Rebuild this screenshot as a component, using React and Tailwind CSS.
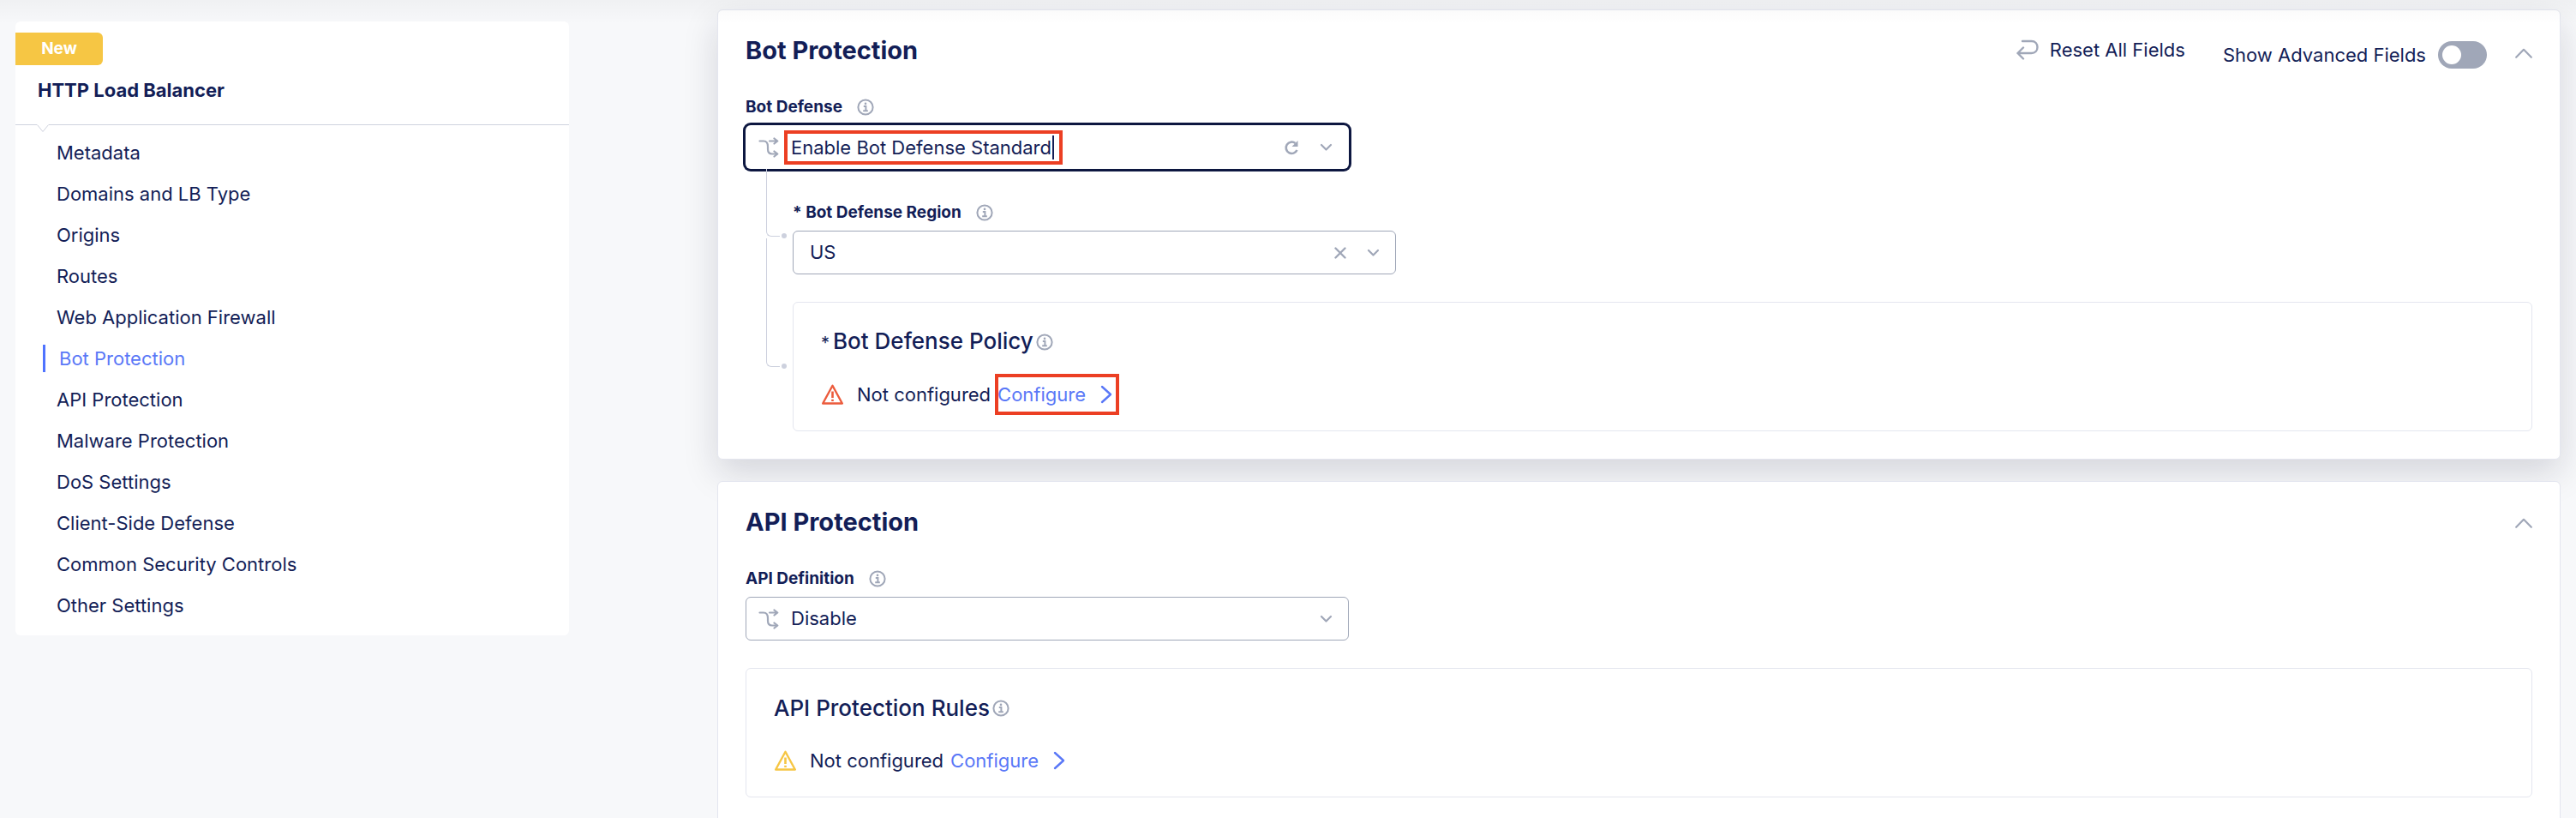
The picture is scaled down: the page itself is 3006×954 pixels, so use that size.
function Info() {
  return (
    <svg aria-hidden="true" viewBox="0 0 20 20" className="size-5 shrink-0" fill="none" stroke="#a0a7b8" strokeWidth="2">
      <circle cx="10" cy="10" r="8.6" />
      <circle cx="10" cy="5.9" r="1.3" fill="#a0a7b8" stroke="none" />
      <path d="M7.8 8.9h2.6v5M7.2 14.3h5.6" strokeWidth="2" />
    </svg>
  );
}

function Branch() {
  return (
    <svg aria-hidden="true" viewBox="0 0 24 24" className="size-6 shrink-0" fill="none" stroke="#a0a7b8" strokeWidth="2.2" strokeLinecap="round" strokeLinejoin="round">
      <path d="M1.5 4.500H6C10 4.500 11 7 11 11V14C11 17.500 12.500 19.500 16 19.500H21.500" />
      <path d="M13 4.500H22M18.500 1.500 22.300 4.500 18.500 7.500M18.500 16.500 22.300 19.500 18.500 22.500" />
    </svg>
  );
}

function ChevronDown() {
  return (
    <svg aria-hidden="true" viewBox="0 0 16 16" className="size-4" fill="none" stroke="#a0a7b8" strokeWidth="2.2" strokeLinecap="round" strokeLinejoin="round">
      <path d="m2 5 5.500 5.500L13 5" />
    </svg>
  );
}

function Collapse({ label }) {
  return (
    <button type="button" aria-label={label} className="flex h-8 w-5 items-center">
      <svg viewBox="0 0 20 12" className="h-3 w-5" fill="none" stroke="#a0a7b8" strokeWidth="2.2" strokeLinecap="round" strokeLinejoin="round">
        <path d="m1.200 10.800 8.800-9 8.800 9" />
      </svg>
    </button>
  );
}

function Warning({ color }) {
  return (
    <svg aria-hidden="true" viewBox="0 0 26 24" className="h-6 w-[26px] shrink-0" fill="none" stroke={color} strokeWidth="2.4">
      <path d="M13.500 1.800 24.800 22.500H2.200Z" strokeLinejoin="round" />
      <path d="M13.500 8.500v7.500M13.500 17.700v2.300" strokeWidth="2.6" />
    </svg>
  );
}

function FieldLabel({ htmlFor, children }) {
  return (
    <div className="flex h-6 items-center gap-[17px]">
      <label htmlFor={htmlFor} className="text-[19px] leading-6 font-bold">{children}</label>
      <Info />
    </div>
  );
}

function SettingBox({ title, required, color, highlighted }) {
  return (
    <section className="mt-8 flex h-[151px] flex-col rounded-md border border-[#e4e6ef] px-8 pt-7">
      <h3 className="flex h-9 items-center gap-[3px] text-[26px] leading-9 font-medium">
        <span>
          {required && <span className="mr-1 text-[20px] font-normal">*</span>}
          {title}
        </span>
        <Info />
      </h3>
      <div className="mt-[27px] flex h-8 items-center text-[22px] leading-8">
        <Warning color={color} />
        <span className="ml-4">Not configured</span>
        <a href="#configure" className="relative ml-2 flex items-center gap-[17px] text-[#5a78f7]">
          Configure
          <svg aria-hidden="true" viewBox="0 0 14 22" className="h-[22px] w-[14px]" fill="none" stroke="#5a78f7" strokeWidth="2.4" strokeLinecap="round" strokeLinejoin="round">
            <path d="m2 2 10 9-10 9" />
          </svg>
          {highlighted && <span className="absolute -inset-y-2 -right-2 -left-[3px] border-4 border-[#ec3f23]" />}
        </a>
      </div>
    </section>
  );
}

function CardTitle({ children }) {
  return <h2 className="text-[29px] leading-10 font-bold">{children}</h2>;
}

const links = [
  "Metadata",
  "Domains and LB Type",
  "Origins",
  "Routes",
  "Web Application Firewall",
  "Bot Protection",
  "API Protection",
  "Malware Protection",
  "DoS Settings",
  "Client-Side Defense",
  "Common Security Controls",
  "Other Settings",
];

export default function App() {
  return (
    <div className="relative flex h-screen items-start gap-[173px] overflow-hidden bg-[#f7f8fa] pr-[18px] pl-[18px] font-['Inter',sans-serif] text-[#131e57]">
      <aside className="mt-[25px] w-[646px] shrink-0 rounded-md bg-white">
        <div className="relative h-[121px] border-b border-[#cfd2de] pt-[13px]">
          <span className="flex h-[38px] w-[102px] items-center justify-center rounded-r-md bg-[#f6c644] text-[19px] font-bold text-white">New</span>
          <h1 className="mt-[13px] pl-[26px] text-[22px] leading-8 font-bold">HTTP Load Balancer</h1>
          <svg aria-hidden="true" viewBox="0 0 16 10" className="absolute top-full left-6 h-[10px] w-4" fill="#fff" stroke="#cfd2de">
            <path d="M1 0 8 8.500 15 0" />
            <path d="M1.500 0H14.500" stroke="#fff" strokeWidth="2" />
          </svg>
        </div>
        <nav aria-label="Sections" className="pt-2 pb-[11px]">
          {links.map((t) =>
            t === "Bot Protection" ? (
              <a key={t} href="#bot" aria-current="true" className="flex h-12 items-center pl-8 text-[22px] text-[#5a78f7]">
                <span className="flex h-8 items-center border-l-3 border-[#4f73ff] pl-4">{t}</span>
              </a>
            ) : (
              <a key={t} href="#section" className="flex h-12 items-center pl-12 text-[22px]">{t}</a>
            ),
          )}
        </nav>
      </aside>

      <main className="mt-[11px] flex min-w-0 grow flex-col gap-[25px]">
        <section className="rounded-md border border-[#e4e6ef] bg-white px-8 pb-8 shadow-[0_16px_40px_rgba(20,20,50,0.15)]">
          <header className="flex items-start justify-between pt-[27px]">
            <CardTitle>Bot Protection</CardTitle>
            <div className="flex items-start text-[22px] leading-8">
              <button type="button" className="mt-[3px] flex items-center gap-[13px]">
                <svg aria-hidden="true" viewBox="0 0 26 24" className="h-6 w-[26px]" fill="none" stroke="#a0a7b8" strokeWidth="2.4" strokeLinecap="round" strokeLinejoin="round">
                  <path d="M7 2H17.500C22 2 24.500 5 24.500 9S22 16 17.500 16H1.500M8 9.500 1.500 16 8 22.500" />
                </svg>
                Reset All Fields
              </button>
              <label className="mt-[9px] ml-11 flex items-center gap-[14px]">
                Show Advanced Fields
                <input type="checkbox" role="switch" className="h-8 w-[57px] appearance-none rounded-full bg-[#a0a7b8] p-[5px] before:block before:size-[22px] before:rounded-full before:bg-white" />
              </label>
              <div className="mt-[7px] ml-[33px]"><Collapse label="Collapse Bot Protection" /></div>
            </div>
          </header>

          <div className="mt-[33px]">
            <FieldLabel htmlFor="bot-defense">Bot Defense</FieldLabel>
            <div className="mt-[9px] flex h-[51px] w-[704px] items-center rounded-md pr-[18px] pl-[15px] ring-3 ring-[#0d1740]">
              <Branch />
              <div className="relative ml-[14px] flex items-center">
                <input id="bot-defense" defaultValue="Enable Bot Defense Standard" className="w-[306px] bg-transparent text-[22px] leading-8 outline-none" />
                <span className="-ml-px h-7 w-[2px] bg-[#131e57]" />
                <span className="absolute -inset-y-1 -right-[10px] -left-2 border-4 border-[#ec3f23]" />
              </div>
              <button type="button" aria-label="Reset Bot Defense" className="ml-auto">
                <svg viewBox="0 0 18 18" className="size-[18px]" fill="none" stroke="#a0a7b8" strokeWidth="2.6">
                  <path d="M15.500 12A6.700 6.700 0 1 1 13.500 4" />
                  <path d="M16.500 1V8H9.500Z" fill="#a0a7b8" stroke="none" />
                </svg>
              </button>
              <span className="ml-6"><ChevronDown /></span>
            </div>

            <div className="flex">
              <div aria-hidden="true" className="flex w-[55px] shrink-0 flex-col pl-6">
                <div className="relative h-[79px] w-4 rounded-bl-md border-b border-l border-[#cdd1de]">
                  <span className="absolute -right-2 -bottom-[3px] size-[6px] rounded-full bg-[#cdd1de]" />
                </div>
                <div className="relative mt-[2px] h-[150px] w-4 rounded-bl-md border-b border-l border-[#cdd1de]">
                  <span className="absolute -right-2 -bottom-[3px] size-[6px] rounded-full bg-[#cdd1de]" />
                </div>
              </div>
              <div className="min-w-0 grow pt-[39px]">
                <FieldLabel htmlFor="region"><span aria-hidden="true">* </span>Bot Defense Region</FieldLabel>
                <div className="relative mt-[9px] w-[704px]">
                  <select id="region" className="block h-[51px] w-full appearance-none rounded-md border border-[#a0a7b8] px-[19px] text-[22px]">
                    <option>US</option>
                  </select>
                  <div className="pointer-events-none absolute inset-y-0 right-[18px] flex items-center gap-6">
                    <svg aria-hidden="true" viewBox="0 0 14 14" className="size-[14px]" fill="none" stroke="#a0a7b8" strokeWidth="2.4" strokeLinecap="round">
                      <path d="m1.500 1.500 11 11M12.500 1.500l-11 11" />
                    </svg>
                    <ChevronDown />
                  </div>
                </div>
                <SettingBox title="Bot Defense Policy" required highlighted color="#ec5b3c" />
              </div>
            </div>
          </div>
        </section>

        <section className="rounded-md border border-[#e4e6ef] bg-white px-8 pb-12">
          <header className="flex items-start justify-between pt-[27px]">
            <CardTitle>API Protection</CardTitle>
            <div className="mt-[5px]"><Collapse label="Collapse API Protection" /></div>
          </header>
          <div className="mt-[34px]">
            <FieldLabel htmlFor="api-definition">API Definition</FieldLabel>
            <div className="relative mt-[9px] w-[704px]">
              <select id="api-definition" className="block h-[51px] w-full appearance-none rounded-md border border-[#a0a7b8] pr-5 pl-[52px] text-[22px]">
                <option>Disable</option>
              </select>
              <div className="pointer-events-none absolute inset-y-0 right-[18px] left-[15px] flex items-center justify-between">
                <Branch />
                <ChevronDown />
              </div>
            </div>
            <SettingBox title="API Protection Rules" color="#f6c644" />
          </div>
        </section>
      </main>

      <div aria-hidden="true" className="pointer-events-none absolute inset-x-0 top-0 h-7 bg-linear-to-b from-black/3 to-transparent" />
    </div>
  );
}
